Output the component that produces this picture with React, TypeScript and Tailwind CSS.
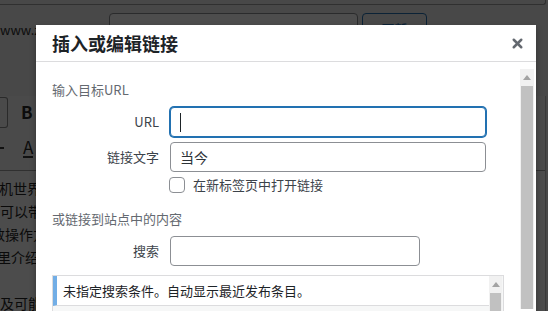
import { X } from "lucide-react";

function Field({
  label,
  width,
  focused,
  value,
}: {
  label: string;
  width: string;
  focused?: boolean;
  value?: string;
}) {
  return (
    <div className="flex items-center">
      <div className="w-[108px] pr-[1px] text-right text-[13px] leading-[18px] text-[#3c434a]">{label}</div>
      <div
        className={
          "ml-[10px] flex h-[30px] items-center rounded-[4px] border bg-white pl-[9px] text-[14px] text-[#2c3338] " +
          width +
          (focused ? " border-[#2271b1] shadow-[0_0_0_1px_#2271b1]" : " border-[#8c8f94]")
        }
      >
        {focused ? <span className="h-[19px] w-px bg-[#1d2327]" /> : value}
      </div>
    </div>
  );
}

function Scrollbar({ arrowH, className }: { arrowH: string; className: string }) {
  return (
    <div className={"flex flex-col bg-[#f1f1f1] " + className}>
      <div className={"flex items-center justify-center " + arrowH}>
        <svg width="8" height="5" viewBox="0 0 8 5">
          <path d="M4 0 L8 5 L0 5 Z" fill="#a3a3a3" />
        </svg>
      </div>
      <div className="flex-1 bg-[#c1c1c1] mx-px" />
    </div>
  );
}

export default function App() {
  return (
    <div className="relative h-[311px] w-[548px] overflow-hidden bg-[#484848] font-['Noto_Sans_CJK_SC',sans-serif]">
      {/* dimmed editor page behind the dialog */}
      <div className="h-[5px] w-[546px] rounded-br-[3px] border-b border-r border-[#303030]" />
      <div className="mt-[8px] flex h-[40px] items-start">
        <div className="w-[109px] whitespace-nowrap pt-[8px] text-[13px] leading-[18px] text-[#0d0d0d]">www.zhuji.com/</div>
        <div className="h-[28px] w-[249px] rounded-[4px] border border-[#2a2b2c] bg-[#4d4d4d]" />
        <div className="ml-[4px] flex h-[28px] w-[65px] justify-center rounded-[4px] border border-[#0b2236] pt-[6px] text-[13px] leading-[18px] text-[#0b2236]">
          更新
        </div>
      </div>
      <div className="mt-[43px] w-[546px] border-r border-[#3a3a3a] bg-[#4a4a4a]">
        <div className="border-b border-[#303030] pb-[2px]">
          <div className="flex h-[32px] items-center">
            <div className="h-[31px] w-[8px] rounded-r-[3px] border-y border-r border-[#2a2a2a]" />
            <span className="ml-[13px] text-[17px] font-bold text-[#0c0c0c]">B</span>
          </div>
          <div className="flex h-[40px] items-center">
            <div className="h-[2px] w-[4px] bg-[#111]" />
            <span className="ml-[19px] border-b-2 border-[#111] text-[17px] leading-[18px] text-[#0c0c0c]">A</span>
          </div>
        </div>
        <div className="bg-[#4c4c4c] pt-[6px] text-[14px] leading-[23px] text-[#0a0a0a]">
          <div className="-ml-[1px] whitespace-nowrap">机世界里有很多</div>
          <div className="whitespace-nowrap">可以带来帮助</div>
          <div className="-ml-[9px] whitespace-nowrap">数操作方法</div>
          <div className="-ml-[3px] whitespace-nowrap">里介绍一下</div>
          <div className="h-[23px]" />
          <div className="whitespace-nowrap">及可能遇到的</div>
        </div>
      </div>

      {/* link dialog */}
      <div className="absolute left-[36px] top-[25px] h-[300px] w-[500px] bg-white shadow-[0_3px_6px_rgba(0,0,0,0.3)]">
        <div className="flex h-[37px] items-center justify-between border-b border-[#dcdcde] pl-[16px] pr-[11px]">
          <span className="text-[18px] font-bold leading-[36px] text-[#1d2327]">插入或编辑链接</span>
          <X size={15} strokeWidth={4} className="text-[#646970]" />
        </div>
        <div className="flex">
          <div className="ml-[16px] w-[452px]">
            <div className="pt-[19px] text-[13px] leading-[18px] text-[#646970]">输入目标URL</div>
            <div className="mt-[8px]">
              <Field label="URL" width="w-[316px]" focused />
            </div>
            <div className="mt-[5px]">
              <Field label="链接文字" width="w-[316px]" value="当今" />
            </div>
            <div className="mt-[5px] flex items-center pl-[117px]">
              <div className="h-[16px] w-[16px] rounded-[4px] border border-[#8c8f94]" />
              <span className="ml-[8px] text-[13px] leading-[16px] text-[#3c434a]">在新标签页中打开链接</span>
            </div>
            <div className="mt-[17px] text-[13px] leading-[18px] text-[#646970]">或链接到站点中的内容</div>
            <div className="mt-[8px]">
              <Field label="搜索" width="w-[250px]" />
            </div>
            <div className="mt-[9px] h-[60px] border border-[#dcdcde] bg-[#f6f7f7]">
              <div className="flex h-full">
                <div className="flex-1">
                  <div className="flex h-[30px] items-center border-b border-[#dcdcde] border-l-4 border-l-[#72aee6] bg-white pl-[6px] text-[13px] text-[#1d2327]">
                    未指定搜索条件。自动显示最近发布条目。
                  </div>
                </div>
                <Scrollbar arrowH="h-[17px]" className="w-[13px] mr-px" />
              </div>
            </div>
          </div>
          <Scrollbar arrowH="h-[17px]" className="ml-[16px] mt-[7px] h-[240px] w-[14px]" />
        </div>
      </div>
    </div>
  );
}
